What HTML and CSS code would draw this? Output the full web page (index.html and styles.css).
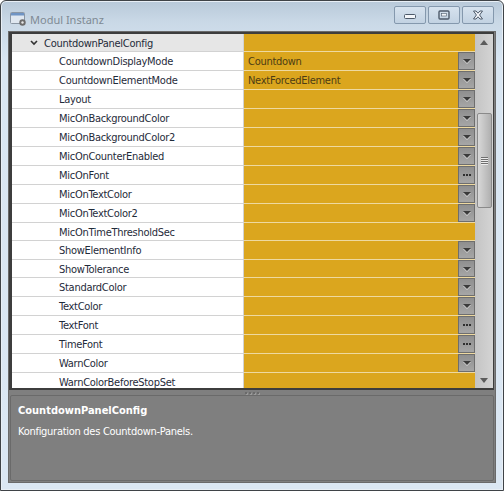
FILE: index.html
```html
<!DOCTYPE html>
<html lang="de">
<head>
<meta charset="utf-8">
<title>Modul Instanz</title>
<link rel="stylesheet" href="styles.css">
</head>
<body>
<div class="window">
  <header class="titlebar">
    <svg class="appicon" width="18" height="16" viewBox="0 0 18 16">
      <rect x="0.5" y="1.5" width="14" height="11" rx="1" fill="#dfe7f0" stroke="#8a96a4"/>
      <rect x="1" y="2" width="13" height="2.5" fill="#6f94c4"/>
      <circle cx="12.5" cy="11.5" r="3.2" fill="#6d6d6d"/>
      <circle cx="12.5" cy="11.5" r="1.2" fill="#e8e8e8"/>
    </svg>
    <span class="title">Modul Instanz</span>
    <div class="winbtns">
      <button class="winbtn"><svg width="12" height="8" viewBox="0 0 12 8"><rect x="0.5" y="3.5" width="11" height="4" rx="1" fill="#f3f6fa" stroke="#4d5a6a"/></svg></button>
      <button class="winbtn"><svg width="12" height="10" viewBox="0 0 12 10"><rect x="1" y="1" width="10" height="8" rx="1" fill="none" stroke="#4d5a6a" stroke-width="1.4"/><rect x="3.5" y="3.5" width="5" height="2.5" fill="#f3f6fa" stroke="#4d5a6a" stroke-width=".6"/></svg></button>
      <button class="winbtn"><svg width="12" height="10" viewBox="0 0 12 10"><path d="M1.5 1h2.5L6 3.2 8 1h2.5L7.6 5l2.9 4H8L6 6.8 4 9H1.5l2.9-4z" fill="#f3f6fa" stroke="#4d5a6a"/></svg></button>
    </div>
  </header>
  <main class="content">
    <section class="grid">
      <div class="rows">
        <div class="row group"><div class="name"><svg class="chev" width="8" height="6" viewBox="0 0 8 6"><path d="M1 1l3 3 3-3" fill="none" stroke="#333" stroke-width="1.6"/></svg>CountdownPanelConfig</div><div class="value"></div></div>
        <div class="row"><div class="name">CountdownDisplayMode</div><div class="value">Countdown<span class="drop"><i></i></span></div></div>
        <div class="row"><div class="name">CountdownElementMode</div><div class="value">NextForcedElement<span class="drop"><i></i></span></div></div>
        <div class="row"><div class="name">Layout</div><div class="value"><span class="drop"><i></i></span></div></div>
        <div class="row"><div class="name">MicOnBackgroundColor</div><div class="value"><span class="drop"><i></i></span></div></div>
        <div class="row"><div class="name">MicOnBackgroundColor2</div><div class="value"><span class="drop"><i></i></span></div></div>
        <div class="row"><div class="name">MicOnCounterEnabled</div><div class="value"><span class="drop"><i></i></span></div></div>
        <div class="row"><div class="name">MicOnFont</div><div class="value"><span class="drop dots"><b></b><b></b><b></b></span></div></div>
        <div class="row"><div class="name">MicOnTextColor</div><div class="value"><span class="drop"><i></i></span></div></div>
        <div class="row"><div class="name">MicOnTextColor2</div><div class="value"><span class="drop"><i></i></span></div></div>
        <div class="row short"><div class="name">MicOnTimeThresholdSec</div><div class="value"></div></div>
        <div class="row"><div class="name">ShowElementInfo</div><div class="value"><span class="drop"><i></i></span></div></div>
        <div class="row short"><div class="name">ShowTolerance</div><div class="value"><span class="drop"><i></i></span></div></div>
        <div class="row"><div class="name">StandardColor</div><div class="value"><span class="drop"><i></i></span></div></div>
        <div class="row"><div class="name">TextColor</div><div class="value"><span class="drop"><i></i></span></div></div>
        <div class="row"><div class="name">TextFont</div><div class="value"><span class="drop dots"><b></b><b></b><b></b></span></div></div>
        <div class="row"><div class="name">TimeFont</div><div class="value"><span class="drop dots"><b></b><b></b><b></b></span></div></div>
        <div class="row"><div class="name">WarnColor</div><div class="value"><span class="drop"><i></i></span></div></div>
        <div class="row last"><div class="name">WarnColorBeforeStopSet</div><div class="value"></div></div>
      </div>
      <div class="scrollbar">
        <div class="arrow up"></div>
        <div class="track"><div class="thumb"><span class="grip"></span></div></div>
        <div class="arrow down"></div>
      </div>
    </section>
    <div class="splitter"><span></span><span></span><span></span><span></span></div>
    <section class="desc">
      <h2>CountdownPanelConfig</h2>
      <p>Konfiguration des Countdown-Panels.</p>
    </section>
  </main>
</div>
</body>
</html>
```

FILE: styles.css
```css
* { box-sizing: border-box; }
html, body { margin: 0; padding: 0; }
body {
  width: 504px;
  height: 491px;
  overflow: hidden;
  background: #fff;
  font-family: "DejaVu Sans Condensed", "DejaVu Sans", sans-serif;
  font-stretch: condensed;
  font-size: 11px;
  letter-spacing: -0.28px;
  color: #1f2b3a;
}
.window {
  width: 504px;
  height: 491px;
  display: flex;
  flex-direction: column;
  border: 1px solid #3f4347;
  border-radius: 6px 6px 0 0;
  padding: 0 7px 7px 7px;
  background: linear-gradient(#b8c9d9 0, #c9d8e6 20px, #d9e6f2 60px, #dbe7f3 100%);
  box-shadow: inset 0 0 0 1px #e8eff6;
}
.titlebar {
  height: 30px;
  flex: none;
  display: flex;
  align-items: center;
}
.appicon { margin-left: 2px; margin-right: 2px; margin-top: 6px; }
.title {
  font-family: "Noto Sans", sans-serif;
  font-stretch: normal;
  font-size: 11px;
  letter-spacing: 0;
  color: #7f8a94;
  margin-top: 6px;
}
.winbtns { margin-left: auto; display: flex; gap: 2px; margin-top: -2px; margin-right: 2px; }
.winbtn {
  width: 32px;
  height: 18px;
  padding: 0;
  display: flex;
  align-items: center;
  justify-content: center;
  border: 1px solid #8498ad;
  border-radius: 2px;
  background: linear-gradient(#d6e2ee, #c2d2e2);
}
.content {
  flex: 1;
  min-height: 0;
  display: flex;
  flex-direction: column;
  background: #7f7f7f;
  border: 1px solid #6a6a6a;
}
.grid {
  height: 358px;
  flex: none;
  display: flex;
  margin-right: 1px;
  border: solid #3d3d3d;
  border-width: 2px 1px 2px 3px;
  background: #fff;
  overflow: hidden;
}
.rows { flex: 1; min-width: 0; overflow: hidden; }
.row {
  height: 19px;
  display: flex;
  line-height: 18px;
  border-bottom: 1px solid #d2d2d2;
}
.row.short { height: 18px; line-height: 17px; }
.row.group { height: 18px; background: #e6e6e6; line-height: 17px; }
.row.last { border-bottom: 0; }
.name {
  width: 232px;
  flex: none;
  padding-top: 1px;
  padding-left: 47px;
  white-space: nowrap;
  overflow: hidden;
  border-right: 1px solid #d2d2d2;
}
.group .name { padding-left: 18px; display: flex; align-items: center; }
.chev { margin-right: 6px; }
.value {
  flex: 1;
  position: relative;
  background: #dba61e;
  padding-top: 1px;
  padding-left: 4px;
  color: #4c3c14;
  margin-bottom: -1px;
  border-bottom: 1px solid #eed9a0;
}
.drop {
  position: absolute;
  top: 0;
  right: 0;
  width: 17px;
  height: 18px;
  background: linear-gradient(#8f8f8f, #a6a6a6);
  border: 1px solid #6e6e6e;
  display: flex;
  align-items: center;
  justify-content: center;
}
.short .drop { height: 17px; }
.drop i {
  width: 0;
  height: 0;
  border-left: 4px solid transparent;
  border-right: 4px solid transparent;
  border-top: 4px solid #3b3b3b;
  filter: drop-shadow(0 1px 0 #d8d8d8);
}
.dots { gap: 1px; }
.dots b { width: 2px; height: 2px; background: #2f2f2f; }
.scrollbar {
  width: 18px;
  flex: none;
  display: flex;
  flex-direction: column;
  background: linear-gradient(90deg, #c4c4c4, #d4d4d4);
}
.arrow { height: 16px; flex: none; position: relative; }
.arrow::after {
  content: "";
  position: absolute;
  left: 5px;
  top: 6px;
  border-left: 4px solid transparent;
  border-right: 4px solid transparent;
}
.arrow.up::after { border-bottom: 5px solid #5c5c5c; }
.arrow.down::after { border-top: 5px solid #5c5c5c; }
.track { flex: 1; padding: 63px 1px 0 2px; }
.thumb {
  height: 95px;
  border: 1px solid #8a8a8a;
  border-radius: 2px;
  background: linear-gradient(90deg, #d8d8d8, #b0b0b0);
  display: flex;
  align-items: center;
  justify-content: center;
}
.grip {
  width: 7px;
  height: 8px;
  background: repeating-linear-gradient(#6f6f6f 0 1px, #ececec 1px 2px);
}
.splitter {
  height: 5px;
  flex: none;
  display: flex;
  align-items: center;
  justify-content: center;
  gap: 2px;
}
.splitter span { width: 2px; height: 2px; background: #6a6a6a; box-shadow: 1px 1px 0 #9a9a9a; }
.desc {
  flex: 1;
  margin: 0 1px 1px;
  border: 1px solid #6a6a6a;
  border-radius: 2px;
  padding: 7px 7px;
  color: #fff;
}
.desc h2 { margin: 0 0 6px; font-size: 11px; line-height: 15px; font-weight: 700; letter-spacing: 0; }
.desc p { margin: 0; line-height: 15px; }
```
